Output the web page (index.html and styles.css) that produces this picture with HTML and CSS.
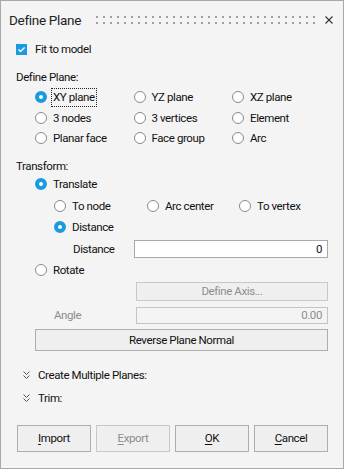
FILE: index.html
```html
<!DOCTYPE html>
<html lang="en">
<head>
    <meta charset="UTF-8">
    <meta name="viewport" content="width=device-width, initial-scale=1.0">
    <title>Define Plane</title>
    <link rel="stylesheet" href="styles.css">
</head>
<body>

    <div class="dialog">
        <div class="titlebar">
            <span class="title">Define Plane</span>
            <span class="grip"></span>
            <svg class="close" width="8" height="8" viewBox="0 0 8 8">
                <path d="M0.5 0.5 L7.5 7.5 M7.5 0.5 L0.5 7.5" stroke="#333" stroke-width="1.1" fill="none"/>
            </svg>
        </div>

        <div class="content">
            <div class="check-row">
                <span class="checkbox">
                    <svg width="11" height="11" viewBox="0 0 11 11">
                        <path d="M2.5 5.6 L4.5 7.5 L8.6 3.4" stroke="#fff" stroke-width="1.4" fill="none"/>
                    </svg>
                </span>
                Fit to model
            </div>

            <div class="section-label">Define Plane:</div>
            <div class="radio-grid">
                <div class="opt"><span class="radio on"></span><span class="focus">XY plane</span></div>
                <div class="opt"><span class="radio"></span>YZ plane</div>
                <div class="opt"><span class="radio"></span>XZ plane</div>
                <div class="opt"><span class="radio"></span>3 nodes</div>
                <div class="opt"><span class="radio"></span>3 vertices</div>
                <div class="opt"><span class="radio"></span>Element</div>
                <div class="opt"><span class="radio"></span>Planar face</div>
                <div class="opt"><span class="radio"></span>Face group</div>
                <div class="opt"><span class="radio"></span>Arc</div>
            </div>

            <div class="section-label transform-label">Transform:</div>
            <div class="row indent-1"><span class="radio on"></span>Translate</div>
            <div class="row indent-2 sub-grid">
                <div class="opt"><span class="radio"></span>To node</div>
                <div class="opt"><span class="radio"></span>Arc center</div>
                <div class="opt"><span class="radio"></span>To vertex</div>
            </div>
            <div class="row indent-2"><span class="radio on"></span>Distance</div>
            <div class="row field-row distance-row">
                <span class="field-label">Distance</span>
                <div class="field">0</div>
            </div>
            <div class="row indent-1"><span class="radio"></span>Rotate</div>

            <div class="btn disabled define-axis">Define Axis...</div>
            <div class="field-row angle-row">
                <span class="field-label disabled">Angle</span>
                <div class="field disabled">0.00</div>
            </div>
            <div class="btn reverse">Reverse Plane Normal</div>

            <div class="expander">
                <svg width="7" height="8" viewBox="0 0 7 8">
                    <path d="M0.5 0.5 L3.5 3.5 L6.5 0.5 M0.5 4.5 L3.5 7.5 L6.5 4.5" stroke="#555" stroke-width="1" fill="none"/>
                </svg>
                Create Multiple Planes:
            </div>
            <div class="expander">
                <svg width="7" height="8" viewBox="0 0 7 8">
                    <path d="M0.5 0.5 L3.5 3.5 L6.5 0.5 M0.5 4.5 L3.5 7.5 L6.5 4.5" stroke="#555" stroke-width="1" fill="none"/>
                </svg>
                Trim:
            </div>

            <div class="footer">
                <div class="btn"><u>I</u>mport</div>
                <div class="btn disabled"><u>E</u>xport</div>
                <div class="btn"><u>O</u>K</div>
                <div class="btn"><u>C</u>ancel</div>
            </div>
        </div>
    </div>

</body>
</html>
```

FILE: styles.css
```css
body {
    margin: 0;
    font-family: 'Segoe UI', Roboto, sans-serif;
    font-size: 11.5px;
    letter-spacing: -0.4px;
    color: #111;
    background-color: #f4f4f4;
}
.dialog {
    width: 344px;
    height: 469px;
    box-sizing: border-box;
    border: 1px solid #a9a9a9;
    background-color: #f4f4f4;
}
.titlebar {
    height: 37px;
    display: flex;
    align-items: center;
    padding: 0 10px 0 8px;
}
.title {
    font-size: 13.5px;
    letter-spacing: -0.3px;
    color: #222;
}
.grip {
    flex: 1;
    height: 8px;
    margin: 0 8px 0 15px;
    background:
        repeating-linear-gradient(to right, #a0a0a0 0 2px, transparent 2px 7px) 0 0 / 100% 2px no-repeat,
        repeating-linear-gradient(to right, #a0a0a0 0 2px, transparent 2px 7px) 0 6px / 100% 2px no-repeat;
}
.close {
    display: block;
}
.content {
    padding: 0 15px 0 15px;
}
.check-row {
    height: 22px;
    display: flex;
    align-items: center;
}
.checkbox {
    width: 11px;
    height: 11px;
    background-color: #1a9be0;
    margin-right: 8px;
    display: flex;
}
.section-label {
    height: 20px;
    line-height: 20px;
    margin-top: 7px;
}
.radio-grid {
    display: grid;
    grid-template-columns: 98.5px 98.5px 1fr;
    grid-auto-rows: 20.5px;
    padding-left: 19px;
}
.opt, .row {
    display: flex;
    align-items: center;
}
.radio {
    width: 12px;
    height: 12px;
    box-sizing: border-box;
    border: 1px solid #8a8a8a;
    border-radius: 50%;
    background-color: #fff;
    margin-right: 6px;
    flex-shrink: 0;
}
.radio.on {
    border: 4px solid #1a9be0;
    background-color: #fff;
}
.focus {
    outline: 1px dotted #222;
    padding: 0 1px;
    margin-left: -1px;
    line-height: 17px;
}
.transform-label {
    height: 16px;
    line-height: 16px;
    margin-top: 9px;
}
.row {
    height: 21.5px;
}
.indent-1 {
    padding-left: 19px;
}
.indent-2 {
    padding-left: 38px;
}
.sub-grid {
    display: grid;
    grid-template-columns: 93px 92px 1fr;
}
.field-row {
    display: flex;
    align-items: center;
}
.distance-row {
    padding-left: 57px;
}
.distance-row .field-label {
    width: 61px;
}
.field {
    flex: 1;
    height: 18px;
    box-sizing: border-box;
    border: 1px solid #a9a9a9;
    background-color: #fff;
    text-align: right;
    padding-right: 5px;
    line-height: 16px;
}
.field.disabled {
    background-color: #f4f4f4;
    border-color: #c4c4c4;
    color: #8d8d8d;
    height: 17px;
    line-height: 15px;
}
.field-label.disabled {
    color: #8d8d8d;
}
.btn {
    box-sizing: border-box;
    border: 1px solid #adadad;
    background-color: #efefef;
    text-align: center;
    display: flex;
    align-items: center;
    justify-content: center;
}
.btn.disabled {
    color: #8d8d8d;
    border-color: #c8c8c8;
}
.define-axis {
    margin: 0.5px 0 0 120px;
    height: 19px;
}
.angle-row {
    margin-top: 6px;
    padding-left: 38px;
}
.angle-row .field-label {
    width: 82px;
}
.reverse {
    margin: 5px 0 0 19px;
    height: 22px;
}
.expander {
    height: 23px;
    display: flex;
    align-items: center;
    padding-left: 7px;
}
.reverse + .expander {
    margin-top: 13px;
}
.expander svg {
    margin-right: 8px;
}
.footer {
    margin-top: 15px;
    display: grid;
    grid-template-columns: repeat(4, 1fr);
    gap: 5px;
    padding-left: 1px;
}
.footer .btn {
    height: 27px;
}
.footer u {
    text-decoration-thickness: 1px;
    text-underline-offset: 2px;
}
```
